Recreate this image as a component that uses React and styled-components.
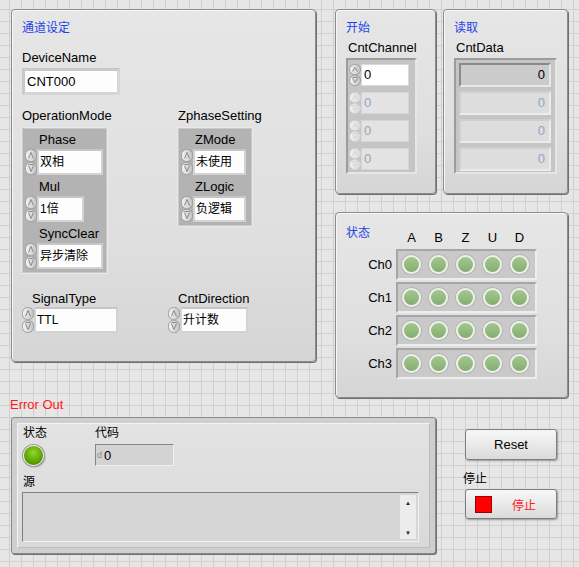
import React from "react";
import styled, { createGlobalStyle } from "styled-components";

const GlobalStyle = createGlobalStyle`
  html, body { margin: 0; padding: 0; min-height: 100%; }
  body {
    background-color: #e6e6e6;
    background-image:
      linear-gradient(#d0d0d0 1px, transparent 1px),
      linear-gradient(90deg, #d0d0d0 1px, transparent 1px);
    background-size: 12px 12px;
    background-position: 9px 9px;
    font-family: "Liberation Sans", "Noto Sans CJK SC", sans-serif;
    font-size: 13px;
    color: #000;
  }
`;

const Page = styled.div`
  box-sizing: border-box;
  width: 579px;
  height: 567px;
  padding: 9px 0 0 11px;
`;

const TopRow = styled.div`
  display: flex;
  align-items: flex-start;
`;

const RightColumn = styled.div`
  display: flex;
  flex-direction: column;
  margin-left: 19px;
`;

const PanelPair = styled.div`
  display: flex;
  gap: 7px;
`;

const Panel = styled.section`
  box-sizing: border-box;
  width: ${(p) => p.$w}px;
  height: ${(p) => p.$h}px;
  margin-top: ${(p) => p.$mt || 0}px;
  border: 1px solid #8c8c8c;
  border-radius: 4px;
  background: linear-gradient(#e6e6e6, #dfdfdf 65%, #d5d5d5);
  box-shadow: inset 1px 1px 0 #f7f7f7, 1px 1px 0 #707070;
  padding: ${(p) => p.$pad || "11px 10px 0"};
`;

const Caption = styled.div`
  font-size: 12px;
  line-height: 15px;
  color: #1f44e6;
  white-space: nowrap;
`;

const Label = styled.div`
  line-height: 15px;
  white-space: nowrap;
  font-size: ${(p) => (p.$cjk ? 12 : 13)}px;
  padding-left: ${(p) => p.$indent || 0}px;
  margin-top: ${(p) => p.$mt || 0}px;
  margin-bottom: ${(p) => p.$mb || 0}px;
  color: ${(p) => p.$color || "#000"};
`;

const StringBox = styled.div`
  box-sizing: border-box;
  width: 98px;
  height: 27px;
  margin-top: 3px;
  border: 3px solid #d6d6d6;
  border-top-color: #c9c9c9;
  border-left-color: #c9c9c9;
  background: #fdfdfd;
  padding-left: 2px;
  line-height: 21px;
`;

const FieldRow = styled.div`
  display: flex;
  margin-top: ${(p) => p.$mt}px;
`;

const FieldCol = styled.div`
  display: flex;
  flex-direction: column;
  align-items: flex-start;
  width: ${(p) => p.$w || "auto"}px;
`;

const ClusterFrame = styled.div`
  box-sizing: border-box;
  width: ${(p) => p.$w}px;
  margin-top: 5px;
  border: 1px solid #c9c9c9;
  box-shadow: 0 0 0 1px #e9e9e9;
  background: #b3b3b3;
  padding: 3px 0 3px 2px;
  display: flex;
  flex-direction: column;
  align-items: flex-start;
`;

const RingWrap = styled.div`
  display: flex;
  align-items: center;
  margin-top: ${(p) => p.$mt || 0}px;
  margin-bottom: ${(p) => p.$mb || 0}px;
`;

const RingBox = styled.div`
  box-sizing: border-box;
  width: ${(p) => p.$w}px;
  height: 26px;
  border: 2px solid #d3d3d3;
  border-top-color: #c6c6c6;
  background: #fdfdfd;
  padding-left: 1px;
  font-size: 12px;
  line-height: 22px;
  white-space: nowrap;
`;

const SpinSvg = styled.svg`
  display: block;
  flex: none;
`;

const Spinner = ({ h = 26, dim }) => {
  const half = h / 2;
  const stroke = dim ? "#cdcdcd" : "#9c9c9c";
  const arrow = dim ? "#d2d2d2" : "#8a8a8a";
  const fill = dim ? "url(#spinDim)" : "url(#spin)";
  return (
    <SpinSvg width="12" height={h} viewBox={`0 0 12 ${h}`}>
      <defs>
        <linearGradient id="spin" x1="0" x2="1" y1="0" y2="0">
          <stop offset="0" stopColor="#f6f6f6" />
          <stop offset="1" stopColor="#c2c2c2" />
        </linearGradient>
        <linearGradient id="spinDim" x1="0" x2="1" y1="0" y2="0">
          <stop offset="0" stopColor="#f2f2f2" />
          <stop offset="1" stopColor="#dadada" />
        </linearGradient>
      </defs>
      <rect x="0.5" y="0.5" width="11" height={half - 1} rx="5" fill={fill} stroke={stroke} />
      <rect x="0.5" y={half + 0.5} width="11" height={half - 1} rx="5" fill={fill} stroke={stroke} />
      <path d={`M3.5 ${half - 3.5} L6 3.5 L8.5 ${half - 3.5}`} fill="none" stroke={arrow} strokeWidth="1" />
      <path d={`M3.5 ${half + 3.5} L6 ${h - 3.5} L8.5 ${half + 3.5} M3.5 ${half + 2.5} H8.5`} fill="none" stroke={arrow} strokeWidth="1" />
    </SpinSvg>
  );
};

const Ring = ({ value, w, mt, mb }) => (
  <RingWrap $mt={mt} $mb={mb}>
    <Spinner />
    <RingBox $w={w}>{value}</RingBox>
  </RingWrap>
);

const ClusterItem = ({ label, value, w, last }) => (
  <>
    <Label $indent={14} $mb={2}>{label}</Label>
    <Ring value={value} w={w} mb={last ? 0 : 4} />
  </>
);

const ArrayFrame = styled.div`
  box-sizing: border-box;
  width: ${(p) => p.$w}px;
  height: 116px;
  margin-top: 3px;
  background: #c5c5c5;
  border: 2px solid;
  border-color: #9c9c9c #e6e6e6 #e6e6e6 #9c9c9c;
  padding: ${(p) => p.$pad};
  display: flex;
  flex-direction: column;
  gap: ${(p) => p.$gap}px;
`;

const ArrayBox = styled.div`
  box-sizing: border-box;
  width: 48px;
  height: 22px;
  border: 1px solid ${(p) => (p.$dim ? "#d6d6d6" : "#d9d9d9")};
  background: ${(p) => (p.$dim ? "#e3e3e3" : "#ffffff")};
  color: ${(p) => (p.$dim ? "#8fa6c4" : "#000")};
  padding-left: 2px;
  line-height: 20px;
`;

const IndicatorBox = styled.div`
  box-sizing: border-box;
  width: 92px;
  height: 24px;
  border: 2px solid;
  border-color: ${(p) => (p.$dim ? "#cfcfcf #ececec #ececec #cfcfcf" : "#8a8a8a #e8e8e8 #e8e8e8 #8a8a8a")};
  background: ${(p) => (p.$dim ? "#dddddd" : "#cbcbcb")};
  color: ${(p) => (p.$dim ? "#8fa6c4" : "#000")};
  text-align: right;
  padding-right: 4px;
  line-height: 20px;
`;

const StatusGrid = styled.div`
  display: grid;
  grid-template-columns: 50px 141px;
  row-gap: 2px;
`;

const Letters = styled.div`
  display: flex;
  gap: 8px;
  padding: 4px 0 2px 6px;
`;

const Letter = styled.span`
  width: 19px;
  text-align: center;
  line-height: 15px;
`;

const RowLabel = styled.div`
  text-align: right;
  padding-right: 4px;
  line-height: 31px;
`;

const LedFrame = styled.div`
  box-sizing: border-box;
  height: 31px;
  border: 2px solid;
  border-color: #a6a6a6 #ededed #ededed #a6a6a6;
  background: #c9c9c9;
  display: flex;
  align-items: center;
  gap: 8px;
  padding-left: 4px;
`;

const Led = styled.span`
  box-sizing: border-box;
  width: 19px;
  height: 19px;
  border-radius: 50%;
  border: 2px solid #eef1ea;
  box-shadow: 0 0 0 1px #b4b4b4;
  background: linear-gradient(#a2c890, #86ad70);
`;

const BottomRow = styled.div`
  display: flex;
  align-items: flex-start;
`;

const ErrorColumn = styled.div`
  display: flex;
  flex-direction: column;
  margin-top: -1px;
`;

const ErrorCluster = styled.div`
  box-sizing: border-box;
  width: 425px;
  height: 137px;
  margin-top: 5px;
  border: 1px solid #8a8a8a;
  border-radius: 3px;
  background: #cfcfcf;
  box-shadow: 1px 1px 0 #707070;
  padding: 5px;
`;

const ErrorInner = styled.div`
  box-sizing: border-box;
  height: 100%;
  border: 1px solid;
  border-color: #f3f3f3 #bcbcbc #bcbcbc #f3f3f3;
  background: linear-gradient(#e3e3e3, #d9d9d9);
  padding: 2px 0 0 5px;
`;

const ErrTop = styled.div`
  display: flex;
`;

const ErrLed = styled.div`
  box-sizing: border-box;
  width: 21px;
  height: 21px;
  margin-top: 4px;
  border-radius: 50%;
  border: 1px solid #ececec;
  box-shadow: 0 0 0 1px #9a9a9a, 1px 1px 2px rgba(0, 0, 0, 0.4);
  background: radial-gradient(circle at 50% 35%, #93d62c, #5ba300 60%, #3f8000);
`;

const CodeBox = styled.div`
  box-sizing: border-box;
  width: 79px;
  height: 22px;
  margin-top: 3px;
  border: 1px solid #858585;
  border-bottom-color: #f0f0f0;
  border-right-color: #f0f0f0;
  background: #d3d3d3;
  display: flex;
  align-items: center;
  padding-left: 1px;
`;

const Radix = styled.span`
  font-size: 9px;
  color: #8c8c8c;
  margin-right: 2px;
`;

const SourceBox = styled.div`
  box-sizing: border-box;
  width: 397px;
  height: 50px;
  margin: 2px 0 0 -1px;
  border: 1px solid #808080;
  border-bottom-color: #f2f2f2;
  border-right-color: #f2f2f2;
  background: #d6d6d6;
  display: flex;
  justify-content: flex-end;
  padding: 2px 2px 2px 0;
`;

const ScrollBar = styled.div`
  width: 16px;
  background: #ececec;
  display: flex;
  flex-direction: column;
  justify-content: space-between;
  align-items: center;
  padding: 5px 0 3px;
  font-size: 6px;
  line-height: 6px;
  color: #222;
`;

const ButtonColumn = styled.div`
  display: flex;
  flex-direction: column;
  margin: 31px 0 0 29px;
`;

const LvButton = styled.button`
  box-sizing: border-box;
  width: 92px;
  height: ${(p) => p.$h}px;
  margin-top: ${(p) => p.$mt || 0}px;
  border: 1px solid #7e7e7e;
  border-radius: 3px;
  background: linear-gradient(#f7f7f7, #ebebeb 45%, #dadada);
  box-shadow: 1px 1px 2px rgba(0, 0, 0, 0.35);
  font-family: inherit;
  font-size: 13px;
  color: #000;
  padding: 0;
  display: flex;
  align-items: center;
  justify-content: ${(p) => (p.$stop ? "flex-start" : "center")};
`;

const StopSquare = styled.span`
  box-sizing: border-box;
  width: 17px;
  height: 17px;
  margin-left: 9px;
  background: #ff0000;
  border: 1px solid #a00000;
`;

const StopText = styled.span`
  margin-left: 20px;
  font-size: 12px;
  color: #ff2020;
`;

const ChannelArray = () => (
  <ArrayFrame $w={71} $pad="4px 0 0 1px" $gap={6}>
    {[0, 1, 2, 3].map((i) => (
      <RingWrap key={i}>
        <Spinner h={22} dim={i > 0} />
        <ArrayBox $dim={i > 0}>0</ArrayBox>
      </RingWrap>
    ))}
  </ArrayFrame>
);

const DataArray = () => (
  <ArrayFrame $w={103} $pad="3px 0 0 3px" $gap={4}>
    {[0, 1, 2, 3].map((i) => (
      <IndicatorBox key={i} $dim={i > 0}>0</IndicatorBox>
    ))}
  </ArrayFrame>
);

export default function App() {
  return (
    <Page>
      <GlobalStyle />
      <TopRow>
        <Panel $w={305} $h={353}>
          <Caption>通道设定</Caption>
          <Label $mt={14}>DeviceName</Label>
          <StringBox>CNT000</StringBox>
          <FieldRow $mt={13}>
            <FieldCol $w={156}>
              <Label>OperationMode</Label>
              <ClusterFrame $w={85}>
                <ClusterItem label="Phase" value="双相" w={66} />
                <ClusterItem label="Mul" value="1倍" w={47} />
                <ClusterItem label="SyncClear" value="异步清除" w={66} last />
              </ClusterFrame>
            </FieldCol>
            <FieldCol>
              <Label>ZphaseSetting</Label>
              <ClusterFrame $w={74}>
                <ClusterItem label="ZMode" value="未使用" w={53} />
                <ClusterItem label="ZLogic" value="负逻辑" w={53} last />
              </ClusterFrame>
            </FieldCol>
          </FieldRow>
          <FieldRow $mt={18}>
            <FieldCol $w={146}>
              <Label $indent={10}>SignalType</Label>
              <Ring value="TTL" w={84} mt={1} />
            </FieldCol>
            <FieldCol>
              <Label $indent={10}>CntDirection</Label>
              <Ring value="升计数" w={68} mt={1} />
            </FieldCol>
          </FieldRow>
        </Panel>

        <RightColumn>
          <PanelPair>
            <Panel $w={101} $h={185}>
              <Caption>开始</Caption>
              <Label $indent={2} $mt={4}>CntChannel</Label>
              <ChannelArray />
            </Panel>
            <Panel $w={125} $h={185}>
              <Caption>读取</Caption>
              <Label $indent={2} $mt={4}>CntData</Label>
              <DataArray />
            </Panel>
          </PanelPair>
          <Panel $w={233} $h={186} $mt={18} $pad="13px 0 0 10px">
            <StatusGrid>
              <Caption>状态</Caption>
              <Letters>
                {["A", "B", "Z", "U", "D"].map((l) => (
                  <Letter key={l}>{l}</Letter>
                ))}
              </Letters>
              {[0, 1, 2, 3].map((ch) => (
                <React.Fragment key={ch}>
                  <RowLabel>Ch{ch}</RowLabel>
                  <LedFrame>
                    {[0, 1, 2, 3, 4].map((k) => (
                      <Led key={k} />
                    ))}
                  </LedFrame>
                </React.Fragment>
              ))}
            </StatusGrid>
          </Panel>
        </RightColumn>
      </TopRow>

      <BottomRow>
        <ErrorColumn>
          <Label $color="#ff1a1a" style={{ marginLeft: -1 }}>Error Out</Label>
          <ErrorCluster>
            <ErrorInner>
              <ErrTop>
                <FieldCol $w={72}>
                  <Label $cjk>状态</Label>
                  <ErrLed />
                </FieldCol>
                <FieldCol>
                  <Label $cjk>代码</Label>
                  <CodeBox>
                    <Radix>d</Radix>0
                  </CodeBox>
                </FieldCol>
              </ErrTop>
              <Label $cjk $mt={9}>源</Label>
              <SourceBox>
                <ScrollBar>
                  <span>▲</span>
                  <span>▼</span>
                </ScrollBar>
              </SourceBox>
            </ErrorInner>
          </ErrorCluster>
        </ErrorColumn>

        <ButtonColumn>
          <LvButton $h={31}>Reset</LvButton>
          <Label $cjk $mt={12} style={{ marginLeft: -2 }}>停止</Label>
          <LvButton $h={30} $mt={2} $stop>
            <StopSquare />
            <StopText>停止</StopText>
          </LvButton>
        </ButtonColumn>
      </BottomRow>
    </Page>
  );
}
